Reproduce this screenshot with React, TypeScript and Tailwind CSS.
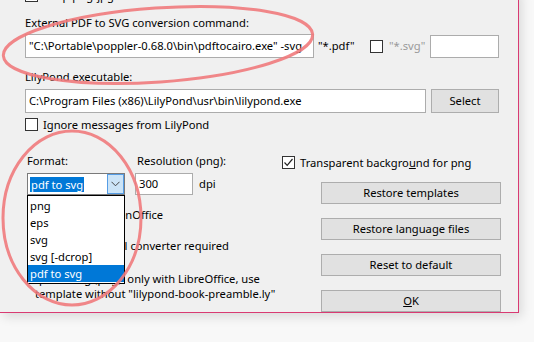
import React from 'react'

const font = { fontFamily: '"Noto Sans", "Open Sans", Arial, sans-serif' }

function Box({ checked = false }: { checked?: boolean }) {
    return (
        <div className="w-[13px] h-[13px] border border-[#333] bg-white shrink-0 flex items-center justify-center">
            {checked && (
                <svg width="11" height="11" viewBox="0 0 11 11">
                    <path d="M1.5 5.5 L4.2 8.3 L9.5 2" fill="none" stroke="#222" strokeWidth="1.2" />
                </svg>
            )}
        </div>
    )
}

function Btn({ children }: { children: React.ReactNode }) {
    return (
        <div className="w-[180px] h-[22px] bg-[#e1e1e1] border border-[#adadad] flex items-center justify-center text-black">
            {children}
        </div>
    )
}

const formats = ['png', 'eps', 'svg', 'svg [-dcrop]', 'pdf to svg']

export default function App() {
    return (
        <div className="w-[534px] h-[342px] bg-[#f8f8f8] relative overflow-hidden text-[11.2px] text-black" style={font}>
            <div className="w-[519px] h-[324px] bg-[#f0f0f0] border-r border-b border-[#d93a72] shadow-[3px_4px_10px_rgba(0,0,0,0.12)] relative">
                <div className="pl-[25px]">
                    {/* clipped row above */}
                    <div className="-mt-[11px] h-[13px] flex items-center gap-[5px]">
                        <Box />
                        <span className="leading-[13px]">Keep png/jpg</span>
                    </div>

                    <div className="mt-[13px] h-[15px] leading-[15px]">External PDF to SVG conversion command:</div>

                    <div className="mt-[4px] h-[24px] flex items-center">
                        <div className="w-[289px] h-[24px] bg-white border border-[#acacac] flex items-center px-[3px] whitespace-nowrap overflow-hidden">
                            "C:\Portable\poppler-0.68.0\bin\pdftocairo.exe" -svg
                        </div>
                        <span className="ml-[4px] w-[52px]">"*.pdf"</span>
                        <Box />
                        <span className="ml-[6px] text-[#9a9a9a] w-[41px]">"*.svg"</span>
                        <div className="w-[69px] h-[23px] bg-white border border-[#acacac]"></div>
                    </div>

                    <div className="mt-[11px] h-[15px] leading-[15px]">LilyPond executable:</div>

                    <div className="mt-[5px] h-[24px] flex items-center gap-[5px]">
                        <div className="w-[401px] h-[24px] bg-white border border-[#acacac] flex items-center px-[3px] whitespace-nowrap">
                            C:\Program Files (x86)\LilyPond\usr\bin\lilypond.exe
                        </div>
                        <div className="w-[68px] h-[24px] bg-[#e1e1e1] border border-[#adadad] flex items-center justify-center">Select</div>
                    </div>

                    <div className="mt-[5px] h-[13px] flex items-center gap-[5px]">
                        <Box />
                        <span className="leading-[13px]">Ignore messages from LilyPond</span>
                    </div>

                    <div className="mt-[22px] flex">
                        {/* left column */}
                        <div className="w-[257px] pl-[2px] relative">
                            <div className="flex">
                                <div className="w-[108px]">
                                    <div className="h-[15px] leading-[15px]">Format:</div>
                                    <div className="mt-[5px] w-[98px] h-[22px] bg-white border border-[#7a7a7a] flex items-center pl-[2px]">
                                        <span className="bg-[#0078d7] text-white h-[15px] leading-[15px] px-px">pdf to svg</span>
                                        <div className="ml-auto w-[17px] h-[20px] bg-[#cce4f7] border border-[#569de5] flex items-center justify-center">
                                            <svg width="9" height="6" viewBox="0 0 9 6">
                                                <path d="M0.5 0.8 L4.5 4.8 L8.5 0.8" fill="none" stroke="#444" strokeWidth="1" />
                                            </svg>
                                        </div>
                                    </div>
                                </div>
                                <div>
                                    <div className="h-[15px] leading-[15px] pl-[2px]">Resolution (png):</div>
                                    <div className="mt-[5px] flex items-center">
                                        <div className="w-[58px] h-[22px] bg-white border border-[#acacac] flex items-center px-[3px]">300</div>
                                        <span className="ml-[6px]">dpi</span>
                                    </div>
                                </div>
                            </div>

                            <div className="mt-[12px] h-[15px] leading-[15px] flex items-center">
                                <Box />
                                <span>Support for OpenOffice</span>
                            </div>
                            <div className="mt-[16px] h-[15px] leading-[15px] pl-[17px]">svg: no external converter required</div>
                            <div className="mt-[18px] h-[15px] leading-[15px] whitespace-nowrap pl-[12px]">pdf to svg (png): only with LibreOffice, use</div>
                            <div className="h-[15px] leading-[15px] pl-[8px] whitespace-nowrap">template without "lilypond-book-preamble.ly"</div>

                            {/* open dropdown list */}
                            <div className="absolute left-[2px] top-[42px] w-[98px] bg-white border border-black py-px">
                                {formats.map((f) => (
                                    <div
                                        key={f}
                                        className={
                                            f === 'pdf to svg'
                                                ? 'h-[17px] leading-[17px] px-[2px] bg-[#0078d7] text-white'
                                                : 'h-[17px] leading-[17px] px-[2px]'
                                        }
                                    >
                                        {f}
                                    </div>
                                ))}
                            </div>
                        </div>

                        {/* right column */}
                        <div className="flex flex-col">
                            <div className="mt-[3px] h-[13px] flex items-center gap-[5px]">
                                <Box checked />
                                <span className="leading-[13px]">
                                    Transparent backgro<span className="underline">u</span>nd for png
                                </span>
                            </div>
                            <div className="ml-[39px] mt-[13px] flex flex-col gap-[14px]">
                                <Btn>Restore templates</Btn>
                                <Btn>Restore language files</Btn>
                                <Btn>Reset to default</Btn>
                                <Btn>
                                    <span className="underline">O</span>K
                                </Btn>
                            </div>
                        </div>
                    </div>
                </div>
            </div>

            {/* red annotation ellipses */}
            <svg className="absolute inset-0 pointer-events-none" width="534" height="342">
                <ellipse cx="158" cy="45" rx="155" ry="37" transform="rotate(-4 158 45)" fill="none" stroke="#f07a7c" strokeWidth="3" strokeOpacity="0.9" />
                <ellipse cx="72" cy="218" rx="69" ry="87" fill="none" stroke="#f07a7c" strokeWidth="3" strokeOpacity="0.9" />
            </svg>
        </div>
    )
}
